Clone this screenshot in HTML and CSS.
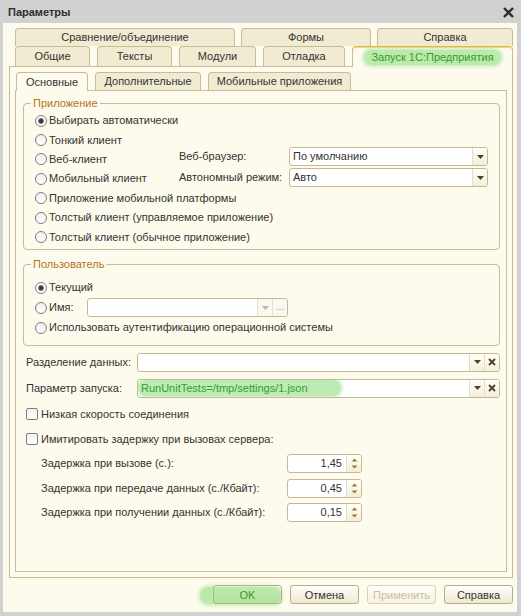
FILE: index.html
```html
<!DOCTYPE html>
<html lang="ru">
<head>
<meta charset="utf-8">
<title>Параметры</title>
<link rel="stylesheet" href="styles.css">
</head>
<body>
<div class="window">
  <div class="titlebar">
    <span class="title">Параметры</span>
    <span class="close"><svg width="11" height="11" viewBox="0 0 11 11"><path d="M1 1L10 10M10 1L1 10" stroke="#2b2b2b" stroke-width="2.4" fill="none"/></svg></span>
  </div>
  <div class="client">
    <div class="tabs">
      <div class="tabrow row1">
        <div class="tab t-compare">Сравнение/объединение</div>
        <div class="tab t-forms">Формы</div>
        <div class="tab t-help">Справка</div>
      </div>
      <div class="tabrow row2">
        <div class="tab t-general">Общие</div>
        <div class="tab t-texts">Тексты</div>
        <div class="tab t-modules">Модули</div>
        <div class="tab t-debug">Отладка</div>
        <div class="tab t-launch active"><span class="hl hl-tab">Запуск 1С:Предприятия</span></div>
      </div>
    </div>
    <div class="panel">
      <div class="subtabs">
        <div class="stab s-main active">Основные</div>
        <div class="stab s-extra">Дополнительные</div>
        <div class="stab s-mobile">Мобильные приложения</div>
      </div>
      <div class="subpanel">
        <fieldset class="group">
          <legend>Приложение</legend>
          <div class="app-body">
            <div class="radios r-app">
              <div class="ritem"><span class="radio on"></span>Выбирать автоматически</div>
              <div class="ritem"><span class="radio"></span>Тонкий клиент</div>
              <div class="ritem"><span class="radio"></span>Веб-клиент</div>
              <div class="ritem"><span class="radio"></span>Мобильный клиент</div>
              <div class="ritem"><span class="radio"></span>Приложение мобильной платформы</div>
              <div class="ritem"><span class="radio"></span>Толстый клиент (управляемое приложение)</div>
              <div class="ritem"><span class="radio"></span>Толстый клиент (обычное приложение)</div>
            </div>
            <div class="opts">
              <div class="opt-row">
                <span class="opt-label">Веб-браузер:</span>
                <div class="field sel">
                  <span class="val">По умолчанию</span>
                  <span class="fbtn"><svg width="7" height="4" viewBox="0 0 7 4"><path d="M0 0H7L3.5 4Z" fill="#4e3f1f"/></svg></span>
                </div>
              </div>
              <div class="opt-row">
                <span class="opt-label">Автономный режим:</span>
                <div class="field sel">
                  <span class="val">Авто</span>
                  <span class="fbtn"><svg width="7" height="4" viewBox="0 0 7 4"><path d="M0 0H7L3.5 4Z" fill="#4e3f1f"/></svg></span>
                </div>
              </div>
            </div>
          </div>
        </fieldset>

        <fieldset class="group g-user">
          <legend>Пользователь</legend>
          <div class="radios r-user">
            <div class="ritem"><span class="radio on"></span>Текущий</div>
            <div class="ritem"><span class="radio"></span><span class="name-label">Имя:</span>
              <div class="field name-field">
                <span class="val"></span>
                <span class="fbtn dis"><svg width="7" height="4" viewBox="0 0 7 4"><path d="M0 0H7L3.5 4Z" fill="#b9b5a8"/></svg></span>
                <span class="fbtn dots">...</span>
              </div>
            </div>
            <div class="ritem"><span class="radio"></span>Использовать аутентификацию операционной системы</div>
          </div>
        </fieldset>

        <div class="frow fr-first">
          <span class="flabel">Разделение данных:</span>
          <div class="field wide">
            <span class="val"></span>
            <span class="fbtn"><svg width="7" height="4" viewBox="0 0 7 4"><path d="M0 0H7L3.5 4Z" fill="#4e3f1f"/></svg></span>
            <span class="fbtn"><svg width="8" height="8" viewBox="0 0 8 8"><path d="M1 1L7 7M7 1L1 7" stroke="#4e3f1f" stroke-width="1.8" fill="none"/></svg></span>
          </div>
        </div>
        <div class="frow fr-second">
          <span class="flabel">Параметр запуска:</span>
          <div class="field wide">
            <span class="val val-hl"><span class="hl hl-param">RunUnitTests=/tmp/settings/1.json</span></span>
            <span class="fbtn"><svg width="7" height="4" viewBox="0 0 7 4"><path d="M0 0H7L3.5 4Z" fill="#4e3f1f"/></svg></span>
            <span class="fbtn"><svg width="8" height="8" viewBox="0 0 8 8"><path d="M1 1L7 7M7 1L1 7" stroke="#4e3f1f" stroke-width="1.8" fill="none"/></svg></span>
          </div>
        </div>

        <div class="crow cr-first"><span class="check"></span>Низкая скорость соединения</div>
        <div class="crow cr-second"><span class="check"></span>Имитировать задержку при вызовах сервера:</div>

        <div class="drow dr-1">
          <span class="dlabel">Задержка при вызове (с.):</span>
          <div class="field num">
            <span class="val">1,45</span>
            <span class="spin"><svg width="7" height="11" viewBox="0 0 7 11"><path d="M0.5 3.5L3.5 0.5L6.5 3.5Z M0.5 7.5H6.5L3.5 10.5Z" fill="#a37a2c"/></svg></span>
          </div>
        </div>
        <div class="drow dr-2">
          <span class="dlabel">Задержка при передаче данных (с./Кбайт):</span>
          <div class="field num">
            <span class="val">0,45</span>
            <span class="spin"><svg width="7" height="11" viewBox="0 0 7 11"><path d="M0.5 3.5L3.5 0.5L6.5 3.5Z M0.5 7.5H6.5L3.5 10.5Z" fill="#a37a2c"/></svg></span>
          </div>
        </div>
        <div class="drow dr-3">
          <span class="dlabel">Задержка при получении данных (с./Кбайт):</span>
          <div class="field num">
            <span class="val">0,15</span>
            <span class="spin"><svg width="7" height="11" viewBox="0 0 7 11"><path d="M0.5 3.5L3.5 0.5L6.5 3.5Z M0.5 7.5H6.5L3.5 10.5Z" fill="#a37a2c"/></svg></span>
          </div>
        </div>
      </div>
    </div>
    <div class="buttons">
      <button class="btn ok"><span class="btn-text">OK</span></button>
      <button class="btn">Отмена</button>
      <button class="btn disabled">Применить</button>
      <button class="btn">Справка</button>
    </div>
  </div>
</div>
</body>
</html>
```

FILE: styles.css
```css
* { box-sizing: border-box; }
html, body { margin: 0; padding: 0; }
body {
  width: 521px;
  height: 616px;
  overflow: hidden;
  font-family: "Liberation Sans", Arial, sans-serif;
  font-size: 11px;
  line-height: 13px;
  color: #333;
  background: #d1d1d1;
}
.window {
  width: 521px;
  height: 616px;
  display: flex;
  flex-direction: column;
  background: #d1d1d1;
  padding: 0 4px 4px 3px;
}
.titlebar {
  height: 23px;
  flex: none;
  display: flex;
  align-items: center;
  justify-content: space-between;
  padding: 2px 2px 0 5px;
}
.title { font-weight: bold; color: #2e2e2e; }
.close { display: flex; width: 12px; height: 11px; }

.client {
  flex: 1;
  background: #fdfbed;
  display: flex;
  flex-direction: column;
  padding: 5px 4px 8px 6px;
}

/* main tabs */
.tabs { flex: none; }
.tabrow { display: flex; padding-left: 6px; }
.row1 { height: 18px; gap: 6px; }
.row2 { height: 20px; gap: 7px; }
.tab {
  border: 1px solid #c9bb93;
  border-bottom: none;
  border-radius: 4px 4px 0 0;
  background: #f1ebd2;
  display: flex;
  align-items: center;
  justify-content: center;
}
.row1 .tab { height: 18px; }
.row2 .tab { height: 20px; }
.t-compare { width: 220px; }
.t-forms { width: 130px; }
.t-help { width: 136px; }
.t-general { width: 75px; }
.t-texts { width: 75px; }
.t-modules { width: 77px; }
.t-debug { width: 82px; }
.t-launch { width: 161px; }
.row2 .tab.active {
  height: 21px;
  margin-bottom: -1px;
  background: #fdfbed;
  border-top-color: #e3b54e;
  box-shadow: inset 0 1px 0 #f6d888;
  position: relative;
  z-index: 1;
}

/* highlights (marker) */
.hl {
  color: #2f9f2f;
  background: rgba(125, 215, 105, 0.5);
  box-shadow: 0 0 3px 2px rgba(140, 220, 120, 0.4);
  border-radius: 8px;
}
.hl-tab {
  display: flex;
  align-items: center;
  height: 15px;
  padding: 0 7px;
  margin-top: 1px;
}
.hl-param {
  display: flex;
  align-items: center;
  height: 16px;
  padding: 0 33px 0 3px;
}

/* panel */
.panel {
  flex: 1;
  border: 1px solid #c9bb93;
  padding: 5px;
  display: flex;
  flex-direction: column;
}
.subtabs { display: flex; gap: 7px; height: 18px; padding-left: 1px; flex: none; }
.stab {
  height: 18px;
  border: 1px solid #c9bb93;
  border-bottom: none;
  border-radius: 4px 4px 0 0;
  background: #f1ebd2;
  display: flex;
  align-items: center;
  justify-content: center;
}
.stab.active {
  background: #fdfbed;
  height: 19px;
  margin-bottom: -1px;
  position: relative;
  z-index: 1;
}
.s-main { width: 72px; }
.s-extra { width: 106px; }
.s-mobile { width: 143px; }
.subpanel {
  flex: 1;
  border: 1px solid #c9bb93;
  padding: 6px 6px 0 7px;
  display: flex;
  flex-direction: column;
}

/* groups */
fieldset.group {
  margin: 0;
  padding: 0;
  border: 1px solid #c9bb93;
  border-radius: 4px;
  min-width: 0;
  flex: none;
}
fieldset.group legend {
  color: #b3731c;
  padding: 0 2px;
  margin-left: 7px;
  line-height: 13px;
  font-size: 11px;
}
fieldset.g-user { margin-top: 8px; }
.app-body {
  display: grid;
  grid-template-columns: 144px 1fr;
  padding: 1px 10px 2px 11px;
}
.r-app { grid-column: 1 / 3; grid-row: 1; display: grid; grid-auto-rows: 19.4px; }
.opts { grid-column: 2; grid-row: 1; align-self: start; margin-top: 36px; display: flex; flex-direction: column; gap: 2px; }
.opt-row { display: flex; align-items: center; height: 19px; }
.opt-label { width: 110px; }
.sel { width: 199px; }
.r-user { display: grid; grid-auto-rows: 20px; padding: 7px 10px 7px 11px; }
.ritem { display: flex; align-items: center; white-space: nowrap; }
.radio {
  width: 12px;
  height: 12px;
  flex: none;
  border-radius: 50%;
  border: 1px solid #7d7d7d;
  background: linear-gradient(#f0f0f0, #ffffff);
  margin-right: 2px;
}
.radio.on {
  background: radial-gradient(circle, #383838 0, #383838 1.6px, #8d8d8d 2.6px, #ffffff 3.6px);
}
.name-label { width: 38px; }
.name-field { width: 201px; height: 18px; background: #fcfbf5; border-color: #d8cfb4; }
.name-field .fbtn { width: 15px; background: #faf8ef; border-left-color: #e6dfca; }
.name-field .dots { color: #9a9a9a; font-size: 10px; align-items: flex-end; padding-bottom: 3px; }

/* fields */
.field {
  display: flex;
  height: 19px;
  border: 1px solid #c6b890;
  border-radius: 3px;
  background: #fff;
  overflow: hidden;
}
.field .val {
  flex: 1;
  display: flex;
  align-items: center;
  padding-left: 3px;
  white-space: nowrap;
}
.field .val-hl { padding-left: 0; }
.fbtn {
  width: 15px;
  flex: none;
  display: flex;
  align-items: center;
  justify-content: center;
  background: linear-gradient(#fffefa, #f3eedb);
  border-left: 1px solid #e6dec4;
}
.frow {
  display: flex;
  align-items: center;
  height: 19px;
  padding: 0 0 0 3px;
  flex: none;
}
.fr-first { margin-top: 7px; }
.fr-second { margin-top: 7px; }
.flabel { width: 111px; flex: none; }
.wide { flex: 1; }

.crow {
  display: flex;
  align-items: center;
  height: 19px;
  padding-left: 3px;
  flex: none;
}
.cr-first { margin-top: 7px; }
.cr-second { margin-top: 6px; }
.check {
  width: 12px;
  height: 12px;
  border: 1px solid #7d7d7d;
  border-radius: 2px;
  background: linear-gradient(#f2f2f2, #ffffff);
  margin-right: 3px;
  flex: none;
}

.drow {
  display: flex;
  align-items: center;
  height: 19px;
  padding-left: 18px;
  flex: none;
}
.dr-1 { margin-top: 5px; }
.dr-2 { margin-top: 6px; }
.dr-3 { margin-top: 5px; }
.dlabel { width: 246px; flex: none; }
.num { width: 75px; }
.num .val { justify-content: flex-end; padding-right: 4px; padding-left: 0; }
.spin {
  width: 15px;
  flex: none;
  display: flex;
  align-items: center;
  justify-content: center;
  background: linear-gradient(#fffefa, #f3eedb);
  border-left: 1px solid #e6dec4;
}

/* buttons */
.buttons {
  flex: none;
  height: 19px;
  margin-top: 7px;
  display: flex;
  justify-content: flex-end;
  gap: 8px;
}
.btn {
  width: 69px;
  height: 19px;
  padding: 0;
  margin: 0;
  font-family: "Liberation Sans", Arial, sans-serif;
  font-size: 11px;
  color: #333;
  border: 1px solid #b9ad88;
  border-radius: 3px;
  background: linear-gradient(#fffef9, #efe9d2);
  display: flex;
  align-items: center;
  justify-content: center;
}
.btn.disabled { color: #cbbfa0; border-color: #dcd2b6; background: linear-gradient(#fffef9, #f6f2e2); }
.btn.ok { position: relative; color: #3a9a22; }
.btn.ok::before {
  content: "";
  position: absolute;
  left: -14px;
  right: 0;
  top: 1px;
  bottom: -1px;
  border-radius: 8px;
  background: rgba(125, 215, 105, 0.5);
  box-shadow: 0 0 3px 2px rgba(140, 220, 120, 0.4);
}
.btn-text { position: relative; }
```
